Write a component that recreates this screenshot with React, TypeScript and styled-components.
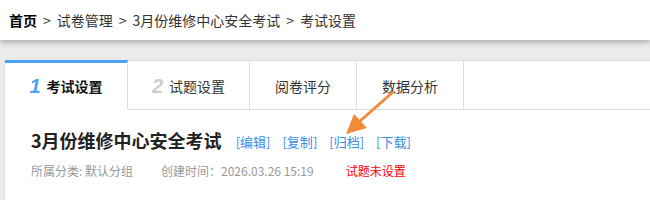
import styled, { createGlobalStyle } from "styled-components";

const Global = createGlobalStyle`
  html, body {
    margin: 0;
    padding: 0;
    background: #ebebeb;
    font-family: "Noto Sans CJK SC", "Noto Sans", sans-serif;
  }
`;

const tabs = [
  { num: "1", label: "考试设置", width: 123, active: true },
  { num: "2", label: "试题设置", width: 122 },
  { label: "阅卷评分", width: 107 },
  { label: "数据分析", width: 107 },
];

const links = ["编辑", "复制", "归档", "下载"];

export default function App() {
  return (
    <Page>
      <Global />
      <TopBar>
        <Crumb>
          <strong>首页</strong>
          <Sep>&gt;</Sep>
          <span>试卷管理</span>
          <Sep>&gt;</Sep>
          <span>3月份维修中心安全考试</span>
          <Sep>&gt;</Sep>
          <span>考试设置</span>
        </Crumb>
      </TopBar>
      <Main>
        <Card>
          <TabStrip>
            {tabs.map((t) => (
              <Tab key={t.label} $active={!!t.active} $width={t.width}>
                {t.num && <TabNum $active={!!t.active}>{t.num}</TabNum>}
                <TabLabel $active={!!t.active}>{t.label}</TabLabel>
              </Tab>
            ))}
            <TabFiller />
          </TabStrip>
          <Body>
            <TitleRow>
              <Title>3月份维修中心安全考试</Title>
              <Links>
                {links.map((l) => (
                  <LinkItem key={l}>[{l}]</LinkItem>
                ))}
              </Links>
            </TitleRow>
            <MetaRow>
              <Meta $gap={28}>所属分类: 默认分组</Meta>
              <Meta $gap={32}>创建时间：2026.03.26 15:19</Meta>
              <Warn>试题未设置</Warn>
            </MetaRow>
          </Body>
        </Card>
      </Main>
      <Arrow width="650" height="200" viewBox="0 0 650 200">
        <line x1="393" y1="92" x2="359" y2="122" stroke="#f28a3a" strokeWidth="3" strokeLinecap="round" />
        <polygon points="346,134 354,114 367,128" fill="#f28a3a" />
      </Arrow>
    </Page>
  );
}

const Page = styled.div`
  position: relative;
  width: 650px;
  height: 200px;
  overflow: hidden;
  background: #ebebeb;
`;

const TopBar = styled.div`
  position: relative;
  z-index: 1;
  height: 40px;
  background: #fff;
  box-shadow: 0 2px 6px rgba(0, 0, 0, 0.3);
  display: flex;
  align-items: center;
  padding-left: 9px;
`;

const Crumb = styled.div`
  font-size: 14px;
  color: #333;
  display: flex;
  align-items: center;
  strong {
    color: #000;
    font-weight: bold;
  }
`;

const Sep = styled.span`
  margin: 0 6px;
  color: #333;
`;

const Main = styled.div`
  padding: 20px 0 0 4px;
`;

const Card = styled.div`
  background: #fff;
  border-left: 1px solid #e2e2e2;
  height: 140px;
`;

const TabStrip = styled.div`
  display: flex;
  height: 50px;
`;

const Tab = styled.div<{ $active: boolean; $width: number }>`
  box-sizing: border-box;
  width: ${(p) => p.$width}px;
  display: flex;
  align-items: center;
  justify-content: center;
  gap: 6px;
  border-right: 1px solid #dcdcdc;
  border-top: ${(p) => (p.$active ? "3px solid #4aa3f5" : "1px solid #dcdcdc")};
  border-bottom: 1px solid ${(p) => (p.$active ? "#fff" : "#dcdcdc")};
  padding-top: ${(p) => (p.$active ? "0" : "2px")};
`;

const TabNum = styled.span<{ $active: boolean }>`
  font-family: "Liberation Sans", Arial, sans-serif;
  font-style: italic;
  font-weight: bold;
  font-size: 20px;
  color: ${(p) => (p.$active ? "#4aa3f5" : "#cfcfcf")};
`;

const TabLabel = styled.span<{ $active: boolean }>`
  font-size: 14px;
  color: ${(p) => (p.$active ? "#111" : "#333")};
  font-weight: ${(p) => (p.$active ? "bold" : "normal")};
`;

const TabFiller = styled.div`
  flex: 1;
  border-top: 1px solid #dcdcdc;
  border-bottom: 1px solid #dcdcdc;
`;

const Body = styled.div`
  padding: 18px 0 0 26px;
`;

const TitleRow = styled.div`
  display: flex;
  align-items: center;
  height: 24px;
`;

const Title = styled.h2`
  margin: 0;
  font-size: 18px;
  font-weight: bold;
  color: #222;
`;

const Links = styled.div`
  display: flex;
  gap: 12px;
  margin-left: 14px;
  padding-top: 3px;
`;

const LinkItem = styled.a`
  font-size: 13px;
  color: #3a8ee6;
  cursor: pointer;
`;

const MetaRow = styled.div`
  display: flex;
  align-items: center;
  margin-top: 10px;
  font-size: 12px;
`;

const Meta = styled.span<{ $gap: number }>`
  color: #999;
  margin-right: ${(p) => p.$gap}px;
`;

const Warn = styled.span`
  color: #f00;
`;

const Arrow = styled.svg`
  position: absolute;
  left: 0;
  top: 0;
  pointer-events: none;
`;
